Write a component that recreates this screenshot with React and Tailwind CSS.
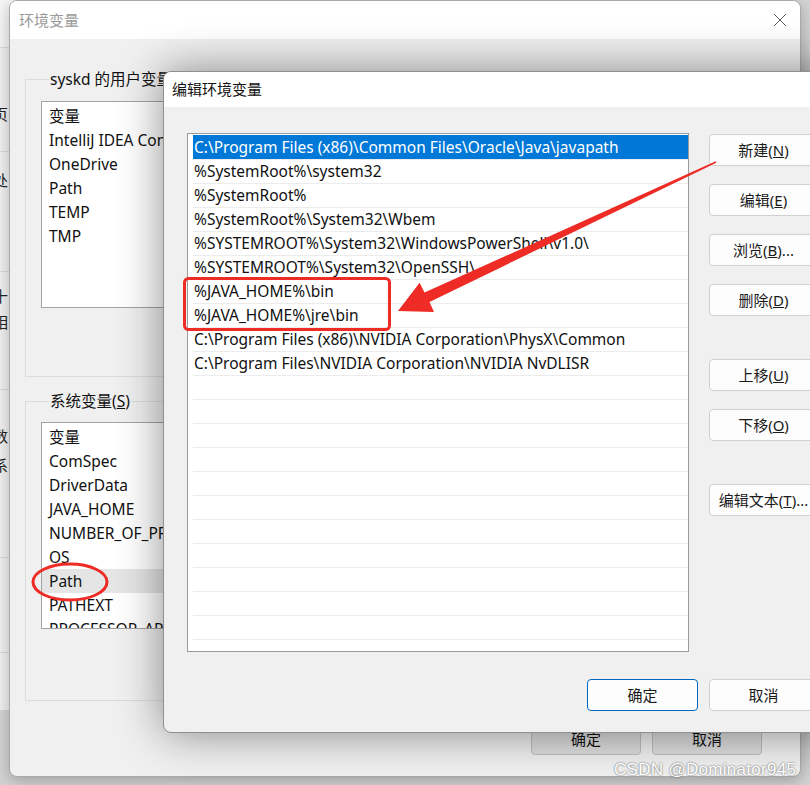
import React from "react";

const font = "font-['Noto_Sans','Noto_Sans_CJK_SC',sans-serif]";

const pathRows = [
  "C:\\Program Files (x86)\\Common Files\\Oracle\\Java\\javapath",
  "%SystemRoot%\\system32",
  "%SystemRoot%",
  "%SystemRoot%\\System32\\Wbem",
  "%SYSTEMROOT%\\System32\\WindowsPowerShell\\v1.0\\",
  "%SYSTEMROOT%\\System32\\OpenSSH\\",
  "%JAVA_HOME%\\bin",
  "%JAVA_HOME%\\jre\\bin",
  "C:\\Program Files (x86)\\NVIDIA Corporation\\PhysX\\Common",
  "C:\\Program Files\\NVIDIA Corporation\\NVIDIA NvDLISR",
];

const userVars = ["IntelliJ IDEA Community Edition", "OneDrive", "Path", "TEMP", "TMP"];
const sysVars = ["ComSpec", "DriverData", "JAVA_HOME", "NUMBER_OF_PROCESSORS", "OS", "Path", "PATHEXT", "PROCESSOR_ARCHITECTURE"];

function Btn({ children, primary }) {
  return (
    <div
      className={
        primary
          ? "flex h-[32px] w-[111px] items-center justify-center rounded-[4px] border border-[#0067c0] bg-[#fdfdfd] text-[15px] text-[#1a1a1a]"
          : "flex h-[32px] w-[109px] items-center justify-center rounded-[4px] border border-[#d0d0d0] bg-[#fdfdfd] text-[15px] text-[#1a1a1a]"
      }
    >
      {children}
    </div>
  );
}

function CloseIcon() {
  return (
    <svg width="14" height="14" viewBox="0 0 14 14">
      <path d="M1 1L13 13M13 1L1 13" stroke="#5a5a5a" strokeWidth="1" />
    </svg>
  );
}

function VarList({ items, highlight }) {
  return (
    <div className="h-[207px] w-[440px] overflow-hidden border border-[#a3a3a3] bg-white">
      <div className="flex h-[26px] items-center pl-[7px] pt-[4px] text-[15.5px]">变量</div>
      {items.map((v) => (
        <div
          key={v}
          className={
            v === highlight
              ? "flex h-[24px] items-center bg-[#e5e5e5] pl-[7px] pt-[2px] text-[15.5px] whitespace-nowrap"
              : "flex h-[24px] items-center pl-[7px] pt-[2px] text-[15.5px] whitespace-nowrap"
          }
        >
          {v}
        </div>
      ))}
    </div>
  );
}

function Glyph({ ch, pt }) {
  return (
    <div className="ml-[-7px] text-[15px] leading-[20px] text-[#222]" style={{ paddingTop: pt }}>
      {ch}
    </div>
  );
}

export default function App() {
  return (
    <div className={`relative h-[785px] w-[810px] overflow-hidden bg-[#d4d4d4] ${font} text-[#111]`}>
      {/* third window, only a sliver shows */}
      <div className="absolute left-0 top-0 flex h-[710px] w-[40px] flex-col bg-[#f0f0f0]">
        <div className="h-[48px] border-b border-[#dadada] bg-[#f6f6f6]" />
        <div className="h-[104px] border-b border-[#dadada]">
          <Glyph ch="页" pt={56} />
        </div>
        <div className="h-[120px] border-b border-[#dadada]">
          <Glyph ch="处" pt={18} />
        </div>
        <div className="h-[118px] border-b border-[#dadada]">
          <Glyph ch="十" pt={14} />
          <Glyph ch="相" pt={6} />
        </div>
        <div className="h-[168px] border-b border-[#dadada]">
          <Glyph ch="数" pt={36} />
          <Glyph ch="系" pt={9} />
        </div>
        <div className="h-[95px] border-b border-[#dadada]" />
      </div>

      {/* back dialog: 环境变量 */}
      <div className="absolute left-[9px] top-0 flex h-[777px] w-[792px] flex-col overflow-hidden rounded-[8px] border border-[#a9a9a9] bg-[#f0f0f0] shadow-[0_4px_16px_rgba(0,0,0,0.25)]">
        <div className="flex h-[38px] shrink-0 items-center justify-between bg-white pl-[9px] pr-[13px]">
          <span className="text-[15px] text-[#9b9b9b]">环境变量</span>
          <CloseIcon />
        </div>
        <div className="flex flex-col pl-[15px] pt-[30px]">
          <fieldset className="h-[308px] w-[760px] border border-[#dcdcdc] pl-[15px] pt-[12px]">
            <legend className="ml-[8px] px-[1px] text-[15.5px] leading-[20px]">
              syskd 的用户变量(<u>U</u>)
            </legend>
            <VarList items={userVars} />
          </fieldset>
          <fieldset className="mt-[14px] h-[310px] w-[760px] border border-[#dcdcdc] pl-[15px] pt-[11px]">
            <legend className="ml-[8px] px-[1px] text-[15.5px] leading-[20px]">
              系统变量(<u>S</u>)
            </legend>
            <VarList items={sysVars} highlight="Path" />
          </fieldset>
        </div>
        <div className="mt-[22px] flex gap-[11px] pl-[521px]">
          <div className="flex h-[32px] w-[110px] items-center justify-center rounded-[4px] border border-[#bdbdbd] bg-[#dedede] text-[15px]">确定</div>
          <div className="flex h-[32px] w-[110px] items-center justify-center rounded-[4px] border border-[#bdbdbd] bg-[#dedede] text-[15px]">取消</div>
        </div>
      </div>

      {/* front dialog: 编辑环境变量 */}
      <div className="absolute left-[163px] top-[71px] flex h-[662px] w-[690px] flex-col overflow-hidden rounded-[8px] border border-[#8f8f8f] bg-[#f0f0f0] shadow-[0_0_45px_rgba(0,0,0,0.45)]">
        <div className="flex h-[35px] shrink-0 items-center bg-white pl-[8px] text-[15px] text-[#111]">编辑环境变量</div>
        <div className="flex pl-[23px] pt-[26px]">
          <div className="h-[519px] w-[502px] overflow-hidden border border-[#9a9a9a] bg-white pl-[5px] pt-[1px]">
            {pathRows.concat(Array(12).fill("")).map((r, i) => (
              <div
                key={i}
                className={
                  i === 0
                    ? "flex h-[24px] items-center bg-[#0078d7] pl-[1px] pt-[1px] text-[15.5px] whitespace-nowrap text-white"
                    : "flex h-[24px] items-center border-t border-[#ececec] pl-[1px] pt-[1px] text-[15.5px] whitespace-nowrap"
                }
              >
                {r}
              </div>
            ))}
          </div>
          <div className="ml-[20px] flex flex-col pt-[1px]">
            <Btn>新建(<u>N</u>)</Btn>
            <div className="mt-[18px]"><Btn>编辑(<u>E</u>)</Btn></div>
            <div className="mt-[18px]"><Btn>浏览(<u>B</u>)...</Btn></div>
            <div className="mt-[18px]"><Btn>删除(<u>D</u>)</Btn></div>
            <div className="mt-[43px]"><Btn>上移(<u>U</u>)</Btn></div>
            <div className="mt-[18px]"><Btn>下移(<u>O</u>)</Btn></div>
            <div className="mt-[43px]"><Btn>编辑文本(<u>T</u>)...</Btn></div>
          </div>
        </div>
        <div className="mt-[27px] flex gap-[11px] pl-[423px]">
          <Btn primary>确定</Btn>
          <Btn>取消</Btn>
        </div>
      </div>

      {/* red annotations */}
      <svg className="pointer-events-none absolute left-0 top-0" width="810" height="785">
        <rect x="184.5" y="278.5" width="205" height="51" rx="4" fill="none" stroke="#ee2b24" strokeWidth="3" />
        <ellipse cx="70" cy="582" rx="37" ry="18" fill="none" stroke="#ee2b24" strokeWidth="3" />
        <polygon
          points="398,311 434,312 429.5,302 716.3,162.7 715.7,161.3 424.5,292.5 419.6,282.8"
          fill="#ee2b24"
        />
      </svg>

      <div className="pointer-events-none absolute left-[614px] top-[757px] text-[17px] tracking-[0.3px] text-white [text-shadow:0_0_2px_rgba(0,0,0,0.7)] font-['Liberation_Sans',sans-serif]">
        CSDN @Dominator945
      </div>
    </div>
  );
}
